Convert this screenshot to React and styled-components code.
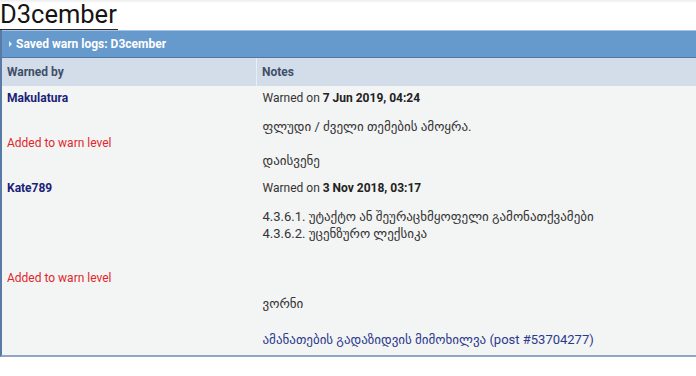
import React from "react";
import styled, { createGlobalStyle } from "styled-components";

const GlobalStyle = createGlobalStyle`
  body {
    margin: 0;
    background: #ffffff;
    font-family: Roboto, "Noto Sans", "DejaVu Sans", sans-serif;
    color: #333333;
  }
`;

const warnings = [
  {
    user: "Makulatura",
    date: "7 Jun 2019, 04:24",
    notes: ["ფლუდი / ძველი თემების ამოყრა."],
    gap: 17,
    reason: "დაისვენე",
  },
  {
    user: "Kate789",
    date: "3 Nov 2018, 03:17",
    notes: [
      "4.3.6.1. უტაქტო ან შეურაცხმყოფელი გამონათქვამები",
      "4.3.6.2. უცენზურო ლექსიკა",
    ],
    gap: 53,
    reason: "ვორნი",
    link: "ამანათების გადაზიდვის მიმოხილვა (post #53704277)",
  },
];

function App() {
  return (
    <Page>
      <GlobalStyle />
      <TitleRow>
        <Title>D3cember</Title>
      </TitleRow>
      <Block>
        <BlockHeader>
          <Arrow />
          Saved warn logs: D3cember
        </BlockHeader>
        <Table>
          <thead>
            <tr>
              <Th width="243px">Warned by</Th>
              <Th>Notes</Th>
            </tr>
          </thead>
          <tbody>
            {warnings.map((w) => (
              <React.Fragment key={w.user}>
                <tr>
                  <Td top>
                    <UserLink>{w.user}</UserLink>
                  </Td>
                  <Td top>
                    Warned on <b>{w.date}</b>
                  </Td>
                </tr>
                <tr>
                  <Td middle>
                    <Added>Added to warn level</Added>
                  </Td>
                  <Td>
                    {w.notes.map((n) => (
                      <Line key={n}>{n}</Line>
                    ))}
                    <Line gap={w.gap}>{w.reason}</Line>
                    {w.link && <PostLink gap={20}>{w.link}</PostLink>}
                  </Td>
                </tr>
              </React.Fragment>
            ))}
          </tbody>
        </Table>
      </Block>
    </Page>
  );
}

const Page = styled.div`
  width: 696px;
  height: 376px;
  overflow: hidden;
  background: linear-gradient(180deg, #ececec 0px, #ffffff 3px);
`;

const TitleRow = styled.div`
  height: 30px;
`;

const Title = styled.span`
  display: inline-block;
  font-size: 25.5px;
  line-height: 29px;
  color: #151515;
  border-bottom: 1px solid #2a2a2a;
  padding-right: 1px;
`;

const Block = styled.div`
  border-left: 2px solid #5a7aa6;
  border-bottom: 2px solid #8fa6c6;
`;

const BlockHeader = styled.div`
  display: flex;
  align-items: center;
  height: 26px;
  padding-left: 7px;
  background: #6699cc;
  border-top: 1px solid #a8c2e2;
  border-bottom: 1px solid #4e77a6;
  color: #ffffff;
  font-size: 12px;
  font-weight: bold;
`;

const Arrow = styled.span`
  width: 0;
  height: 0;
  margin-right: 4px;
  border-top: 3px solid transparent;
  border-bottom: 3px solid transparent;
  border-left: 3px solid #e8eef8;
`;

const Table = styled.table`
  width: 100%;
  border-collapse: collapse;
  font-size: 12px;
`;

const Th = styled.th`
  width: ${(p) => p.width || "auto"};
  height: 28px;
  padding: 0 6px 0 5px;
  text-align: left;
  background: #d2dde9;
  color: #3f4f68;
  font-weight: bold;
  border-left: 1px solid #e8eef5;
  &:first-child {
    border-left: none;
  }
`;

const Td = styled.td`
  background: #f3f4f4;
  padding: ${(p) => (p.top ? "4px 6px 5px 5px" : "6px 6px 7px 5px")};
  line-height: 17px;
  vertical-align: ${(p) => (p.middle ? "middle" : "top")};
  color: #333333;
  & + & {
    padding-left: 6px;
  }
  b {
    color: #222222;
  }
`;

const UserLink = styled.span`
  color: #1b1f78;
  font-weight: bold;
`;

const Added = styled.span`
  color: #e0282a;
`;

const Line = styled.div`
  margin-top: ${(p) => (p.gap ? `${p.gap}px` : "0")};
  font-size: 13px;
`;

const PostLink = styled.div`
  margin-top: ${(p) => p.gap - 1}px;
  font-size: 13px;
  color: #2b3a8c;
`;

export default App;
